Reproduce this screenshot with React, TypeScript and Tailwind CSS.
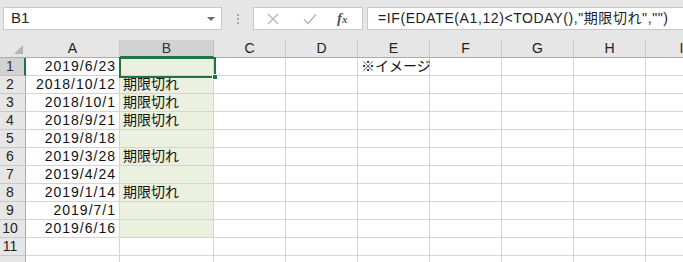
import React from 'react';

const COLS = [
  { key: 'A', w: 94 },
  { key: 'B', w: 94 },
  { key: 'C', w: 72 },
  { key: 'D', w: 72 },
  { key: 'E', w: 72 },
  { key: 'F', w: 72 },
  { key: 'G', w: 72 },
  { key: 'H', w: 72 },
  { key: 'I', w: 72 },
];

const ROWS: { a: string; b: string; e?: string }[] = [
  { a: '2019/6/23', b: '', e: '※イメージ' },
  { a: '2018/10/12', b: '期限切れ' },
  { a: '2018/10/1', b: '期限切れ' },
  { a: '2018/9/21', b: '期限切れ' },
  { a: '2019/8/18', b: '' },
  { a: '2019/3/28', b: '期限切れ' },
  { a: '2019/4/24', b: '' },
  { a: '2019/1/14', b: '期限切れ' },
  { a: '2019/7/1', b: '' },
  { a: '2019/6/16', b: '' },
  { a: '', b: '' },
  { a: '', b: '' },
];

function FormulaBar() {
  return (
    <div className="flex h-[40px] items-start pt-[7px]">
      {/* name box */}
      <div className="ml-[3px] flex h-[23px] w-[219px] items-center justify-between border border-[#c8c8c8] bg-white pl-[7px] pr-[6px]">
        <span className="text-[15px] text-[#222]">B1</span>
        <span className="h-0 w-0 border-x-[4px] border-t-[4px] border-x-transparent border-t-[#6b6b6b]" />
      </div>
      <div className="flex h-[23px] w-[31px] flex-col items-center justify-center gap-[2px]">
        <span className="h-[2px] w-[2px] bg-[#a8a8a8]" />
        <span className="h-[2px] w-[2px] bg-[#a8a8a8]" />
        <span className="h-[2px] w-[2px] bg-[#a8a8a8]" />
      </div>
      {/* cancel / enter / fx */}
      <div className="flex h-[23px] w-[110px] items-center border border-[#c8c8c8] bg-white">
        <svg width="12" height="12" viewBox="0 0 12 12" className="ml-[13px]">
          <path d="M1 1 L11 11 M11 1 L1 11" stroke="#b5b5b5" strokeWidth="1.3" fill="none" />
        </svg>
        <svg width="14" height="12" viewBox="0 0 14 12" className="ml-[24px]">
          <path d="M1 6.5 L5 10.5 L13 1.5" stroke="#b5b5b5" strokeWidth="1.4" fill="none" />
        </svg>
        <span className="ml-[20px] font-['Liberation_Serif',serif] text-[15px] font-bold italic text-[#555]">
          f<span className="text-[11px]">x</span>
        </span>
      </div>
      <div className="ml-[4px] flex h-[23px] flex-1 items-center border border-r-0 border-[#c8c8c8] bg-white pl-[10px]">
        <span className="whitespace-nowrap text-[14px] tracking-[0.6px] text-[#222]">
          =IF(EDATE(A1,12)&lt;TODAY(),"期限切れ","")
        </span>
      </div>
    </div>
  );
}

export default function App() {
  return (
    <div className="relative h-[262px] w-[683px] overflow-hidden bg-[#e6e6e6] font-['Liberation_Sans','Noto_Sans_CJK_JP',sans-serif]">
      <FormulaBar />

      <div className="flex flex-col">
        {/* column header row */}
        <div className="flex h-[18px]">
          <div className="relative w-[26px] shrink-0 border-b border-[#ababab]">
            <span className="absolute bottom-[3px] right-[3px] h-0 w-0 border-b-[9px] border-l-[9px] border-l-transparent border-b-[#b4b4b4]" />
          </div>
          {COLS.map((c) => (
            <div
              key={c.key}
              style={{ width: c.w }}
              className={
                c.key === 'B'
                  ? 'flex shrink-0 items-center justify-center border-b-2 border-r border-b-[#217346] border-r-[#c0c0c0] bg-[#d2d2d2] text-[14px] text-[#333]'
                  : 'flex shrink-0 items-center justify-center border-b border-r border-b-[#ababab] border-r-[#c8c8c8] text-[14px] text-[#222]'
              }
            >
              {c.key}
            </div>
          ))}
        </div>

        {ROWS.map((r, i) => (
          <div key={i} className="flex h-[18px] shrink-0">
            <div
              className={
                i === 0
                  ? 'flex w-[26px] shrink-0 items-center justify-center border-b border-r-2 border-b-[#c0c0c0] border-r-[#217346] bg-[#d2d2d2] pr-[4px] text-[14px] text-[#333]'
                  : 'flex w-[26px] shrink-0 items-center justify-center border-b border-r border-b-[#c8c8c8] border-r-[#ababab] pr-[5px] text-[14px] text-[#222]'
              }
            >
              {i < 11 ? i + 1 : ''}
            </div>
            <div className="flex w-[94px] shrink-0 items-center justify-end border-b border-r border-[#d4d4d4] bg-white pr-[3px] text-[14px] tracking-[1px] text-[#111]">
              {r.a}
            </div>
            <div
              className={
                i < 10
                  ? 'flex w-[94px] shrink-0 items-center border-b border-r border-[#d4d4d4] bg-[#ebf1de] pl-[3px] text-[14px] text-[#111]'
                  : 'flex w-[94px] shrink-0 items-center border-b border-r border-[#d4d4d4] bg-white pl-[3px] text-[14px] text-[#111]'
              }
            >
              {r.b}
            </div>
            {COLS.slice(2).map((c) => (
              <div
                key={c.key}
                style={{ width: c.w }}
                className="flex shrink-0 items-center overflow-visible whitespace-nowrap border-b border-r border-[#d4d4d4] bg-white pl-[3px] text-[14px] text-[#111]"
              >
                {c.key === 'E' && r.e ? r.e : ''}
              </div>
            ))}
          </div>
        ))}
      </div>

      {/* active cell B1 */}
      <div className="pointer-events-none absolute left-[119px] top-[57px] h-[21px] w-[97px] border-2 border-[#217346]">
        <span className="absolute bottom-[-4px] right-[-4px] h-[6px] w-[6px] border border-white bg-[#217346]" />
      </div>
    </div>
  );
}
